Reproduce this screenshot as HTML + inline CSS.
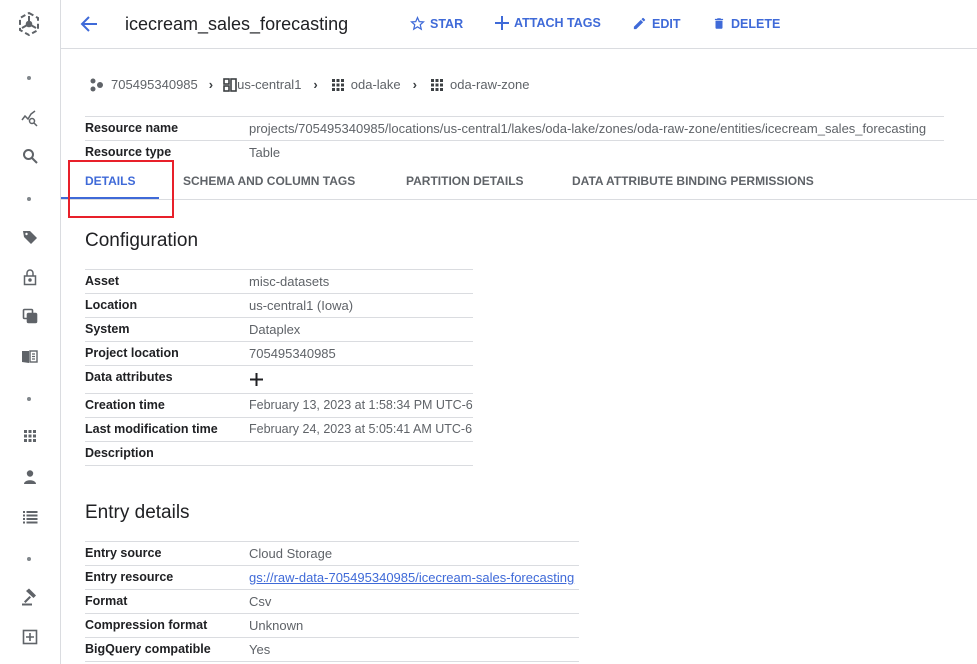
<!DOCTYPE html>
<html><head><meta charset="utf-8"><style>
*{margin:0;padding:0;box-sizing:border-box}
body{width:977px;height:664px;overflow:hidden;background:#fff;font-family:"Liberation Sans",Arial,sans-serif;position:relative;color:#202124}
.a{position:absolute;white-space:nowrap}
.hl{position:absolute;height:1px;background:#dadce0}
.lb{position:absolute;left:85px;font-size:12.5px;font-weight:bold;color:#202124;white-space:nowrap}
.vl{position:absolute;left:249px;font-size:13px;color:#5f6368;white-space:nowrap}
.btn{position:absolute;top:16px;font-size:12.5px;font-weight:bold;color:#3f6ad8;display:flex;align-items:center;gap:5px}
.tab{position:absolute;top:174px;font-size:12px;font-weight:bold;color:#5f6368}
.ic{position:absolute;left:21px;width:18px;height:18px}
.dot{position:absolute;left:27px;width:4px;height:4px;border-radius:50%;background:#80868b}
</style></head><body>
<div style="position:absolute;left:60px;top:0;width:1px;height:664px;background:#dadce0"></div>
<div class="hl" style="left:61px;top:48px;width:916px"></div>
<svg class="a" style="left:16px;top:11px" width="26" height="26" viewBox="0 0 26 26" fill="none" stroke="#5f6368" stroke-width="2"><path d="M13 2 L22 7 V19 L13 24 L4 19 V7 Z" stroke-dasharray="5 3"/><circle cx="13" cy="13" r="2.3" fill="#5f6368"/><path d="M13 13 L13 5 M13 13 L20 17 M13 13 L6 17"/></svg>
<div class="dot" style="top:76px"></div>
<svg class="ic" style="top:109px" viewBox="0 0 18 18" fill="none" stroke="#5f6368" stroke-width="1.5"><path d="M1 11 L4 7 L7 10 L10 5 L14 2"/><circle cx="11" cy="12" r="2.5"/><path d="M13 14 L16 17"/></svg>
<svg class="ic" style="top:147px" viewBox="0 0 18 18" fill="none" stroke="#5f6368" stroke-width="2"><circle cx="7.5" cy="7.5" r="4.5"/><path d="M11 11 L16 16"/></svg>
<div class="dot" style="top:197px"></div>
<svg class="ic" style="top:228px" viewBox="0 0 18 18"><path d="M2 3 H9 L16 10 L10 16 L3 9 Z" fill="#5f6368"/><circle cx="5.5" cy="6" r="1.2" fill="#fff"/></svg>
<svg class="ic" style="top:268px" viewBox="0 0 18 18" fill="none" stroke="#5f6368" stroke-width="1.5"><rect x="3.5" y="8" width="11" height="8.5"/><path d="M6 8 V5 A3 3 0 0 1 12 5 V8"/><circle cx="9" cy="12" r="1" fill="#5f6368"/></svg>
<svg class="ic" style="top:307px" viewBox="0 0 18 18" fill="none" stroke="#5f6368" stroke-width="1.6"><rect x="2.5" y="2.5" width="9" height="9" rx="1"/><rect x="6.5" y="6.5" width="9" height="9" rx="1" fill="#5f6368"/></svg>
<svg class="ic" style="top:347px" viewBox="0 0 18 18"><path d="M1 4 L8 4 L8 16 L1 15 Z" fill="#5f6368"/><rect x="9" y="4" width="7" height="11" fill="none" stroke="#5f6368" stroke-width="1.4"/><path d="M11 7 H14 M11 9.5 H14 M11 12 H14" stroke="#5f6368" stroke-width="1.2"/></svg>
<div class="dot" style="top:397px"></div>
<svg class="ic" style="top:427px" viewBox="0 0 18 18" fill="#5f6368"><rect x="3" y="3" width="3" height="3"/><rect x="7.5" y="3" width="3" height="3"/><rect x="12" y="3" width="3" height="3"/><rect x="3" y="7.5" width="3" height="3"/><rect x="7.5" y="7.5" width="3" height="3"/><rect x="12" y="7.5" width="3" height="3"/><rect x="3" y="12" width="3" height="3"/><rect x="7.5" y="12" width="3" height="3"/><rect x="12" y="12" width="3" height="3"/></svg>
<svg class="ic" style="top:468px" viewBox="0 0 18 18" fill="#5f6368"><circle cx="9" cy="5.5" r="3.2"/><path d="M3 16 C3 11 15 11 15 16 Z"/></svg>
<svg class="ic" style="top:508px" viewBox="0 0 18 18" fill="#5f6368"><rect x="2" y="3" width="2" height="2"/><rect x="5.5" y="3" width="11" height="2"/><rect x="2" y="6.5" width="2" height="2"/><rect x="5.5" y="6.5" width="11" height="2"/><rect x="2" y="10" width="2" height="2"/><rect x="5.5" y="10" width="11" height="2"/><rect x="2" y="13.5" width="2" height="2"/><rect x="5.5" y="13.5" width="11" height="2"/></svg>
<div class="dot" style="top:557px"></div>
<svg class="ic" style="top:588px" viewBox="0 0 18 18" fill="#5f6368"><path d="M5 3 L8 0.5 L15 7.5 L12.5 10 Z"/><path d="M8.5 8 L3 13.5 L4.5 15 L10 9.5 Z"/><rect x="1" y="15.5" width="10" height="2"/></svg>
<svg class="ic" style="top:628px" viewBox="0 0 18 18" fill="none" stroke="#5f6368" stroke-width="1.6"><rect x="2.5" y="2.5" width="13" height="13"/><path d="M9 5 V13 M5 9 H13"/></svg>

<svg class="a" style="left:80px;top:15px" width="18" height="18" viewBox="0 0 18 18" fill="none" stroke="#3f6ad8" stroke-width="2"><path d="M17 9 H2 M9 2 L2 9 L9 16"/></svg>
<div class="a" style="left:125px;top:14px;font-size:18px;color:#202124">icecream_sales_forecasting</div>
<div class="btn" style="left:410px"><svg width="15" height="15" viewBox="0 0 24 24" fill="none" stroke="#3f6ad8" stroke-width="2"><path d="M12 2.5 L14.8 9 L21.5 9.5 L16.4 14 L18 21 L12 17.3 L6 21 L7.6 14 L2.5 9.5 L9.2 9 Z"/></svg>STAR</div>
<div class="btn" style="left:495px"><svg width="14" height="14" viewBox="0 0 14 14" stroke="#3f6ad8" stroke-width="2"><path d="M7 0 V14 M0 7 H14"/></svg>ATTACH TAGS</div>
<div class="btn" style="left:632px"><svg width="15" height="15" viewBox="0 0 24 24" fill="#3f6ad8"><path d="M3 17.25V21h3.75L17.81 9.94l-3.75-3.75L3 17.25zM20.71 7.04a1 1 0 0 0 0-1.41l-2.34-2.34a1 1 0 0 0-1.41 0l-1.83 1.83 3.75 3.75 1.83-1.83z"/></svg>EDIT</div>
<div class="btn" style="left:712px"><svg width="14" height="15" viewBox="0 0 24 24" fill="#3f6ad8"><path d="M6 19c0 1.1.9 2 2 2h8c1.1 0 2-.9 2-2V7H6v12zM19 4h-3.5l-1-1h-5l-1 1H5v2h14V4z"/></svg>DELETE</div>

<div class="a" style="left:89px;top:77px;font-size:13px;color:#5f6368;display:flex;align-items:center">
<svg width="18" height="14" viewBox="0 0 18 14" fill="#5f6368"><circle cx="4" cy="3" r="2.5"/><circle cx="11" cy="7" r="3"/><circle cx="4" cy="11" r="2.5"/></svg>
<span style="margin-left:4px">705495340985</span>
<span style="margin:0 10px 0 11px;color:#3c4043;font-weight:bold">›</span>
<svg width="14" height="14" viewBox="0 0 14 14" fill="none" stroke="#3c4043" stroke-width="1.6"><rect x="1" y="1" width="5" height="5"/><rect x="8" y="1" width="5" height="12"/><rect x="1" y="8" width="5" height="5"/></svg>
<span>us-central1</span>
<span style="margin:0 14px 0 12px;color:#3c4043;font-weight:bold">›</span>
<svg width="12" height="12" viewBox="0 0 12 12" fill="#3c4043"><rect x="0" y="0" width="3" height="3"/><rect x="4.5" y="0" width="3" height="3"/><rect x="9" y="0" width="3" height="3"/><rect x="0" y="4.5" width="3" height="3"/><rect x="4.5" y="4.5" width="3" height="3"/><rect x="9" y="4.5" width="3" height="3"/><rect x="0" y="9" width="3" height="3"/><rect x="4.5" y="9" width="3" height="3"/><rect x="9" y="9" width="3" height="3"/></svg>
<span style="margin-left:7px">oda-lake</span>
<span style="margin:0 14px 0 12px;color:#3c4043;font-weight:bold">›</span>
<svg width="12" height="12" viewBox="0 0 12 12" fill="#3c4043"><rect x="0" y="0" width="3" height="3"/><rect x="4.5" y="0" width="3" height="3"/><rect x="9" y="0" width="3" height="3"/><rect x="0" y="4.5" width="3" height="3"/><rect x="4.5" y="4.5" width="3" height="3"/><rect x="9" y="4.5" width="3" height="3"/><rect x="0" y="9" width="3" height="3"/><rect x="4.5" y="9" width="3" height="3"/><rect x="9" y="9" width="3" height="3"/></svg>
<span style="margin-left:7px">oda-raw-zone</span>
</div>

<div class="hl" style="left:85px;top:116px;width:859px"></div>
<div class="lb" style="top:121px">Resource name</div>
<div class="vl" style="top:121px">projects/705495340985/locations/us-central1/lakes/oda-lake/zones/oda-raw-zone/entities/icecream_sales_forecasting</div>
<div class="hl" style="left:85px;top:140px;width:859px"></div>
<div class="lb" style="top:145px">Resource type</div>
<div class="vl" style="top:145px">Table</div>

<div class="tab" style="left:85px;color:#3f6ad8">DETAILS</div>
<div class="tab" style="left:183px">SCHEMA AND COLUMN TAGS</div>
<div class="tab" style="left:406px">PARTITION DETAILS</div>
<div class="tab" style="left:572px">DATA ATTRIBUTE BINDING PERMISSIONS</div>
<div class="hl" style="left:61px;top:199px;width:916px"></div>
<div class="a" style="left:61px;top:197px;width:98px;height:2px;background:#3f6ad8"></div>
<div class="a" style="left:68px;top:160px;width:106px;height:58px;border:2px solid #e8202a"></div>

<div class="a" style="left:85px;top:230px;font-size:19px;color:#202124">Configuration</div>
<div class="hl" style="left:85px;top:269px;width:388px"></div>
<div class="lb" style="top:274px">Asset</div><div class="vl" style="top:274px">misc-datasets</div>
<div class="hl" style="left:85px;top:293px;width:388px"></div>
<div class="lb" style="top:298px">Location</div><div class="vl" style="top:298px">us-central1 (Iowa)</div>
<div class="hl" style="left:85px;top:317px;width:388px"></div>
<div class="lb" style="top:322px">System</div><div class="vl" style="top:322px">Dataplex</div>
<div class="hl" style="left:85px;top:341px;width:388px"></div>
<div class="lb" style="top:346px">Project location</div><div class="vl" style="top:346px">705495340985</div>
<div class="hl" style="left:85px;top:365px;width:388px"></div>
<div class="lb" style="top:370px">Data attributes</div>
<svg class="a" style="left:250px;top:373px" width="13" height="13" viewBox="0 0 13 13" stroke="#202124" stroke-width="2"><path d="M6.5 0 V13 M0 6.5 H13"/></svg>
<div class="hl" style="left:85px;top:393px;width:388px"></div>
<div class="lb" style="top:398px">Creation time</div><div class="vl" style="top:398px;font-size:12.5px">February 13, 2023 at 1:58:34 PM UTC-6</div>
<div class="hl" style="left:85px;top:417px;width:388px"></div>
<div class="lb" style="top:422px">Last modification time</div><div class="vl" style="top:422px;font-size:12.5px">February 24, 2023 at 5:05:41 AM UTC-6</div>
<div class="hl" style="left:85px;top:441px;width:388px"></div>
<div class="lb" style="top:446px">Description</div>
<div class="hl" style="left:85px;top:465px;width:388px"></div>

<div class="a" style="left:85px;top:502px;font-size:19px;color:#202124">Entry details</div>
<div class="hl" style="left:85px;top:541px;width:494px"></div>
<div class="lb" style="top:546px">Entry source</div><div class="vl" style="top:546px">Cloud Storage</div>
<div class="hl" style="left:85px;top:565px;width:494px"></div>
<div class="lb" style="top:570px">Entry resource</div><div class="vl" style="top:570px;color:#3f6ad8;text-decoration:underline">gs://raw-data-705495340985/icecream-sales-forecasting</div>
<div class="hl" style="left:85px;top:589px;width:494px"></div>
<div class="lb" style="top:594px">Format</div><div class="vl" style="top:594px">Csv</div>
<div class="hl" style="left:85px;top:613px;width:494px"></div>
<div class="lb" style="top:618px">Compression format</div><div class="vl" style="top:618px">Unknown</div>
<div class="hl" style="left:85px;top:637px;width:494px"></div>
<div class="lb" style="top:642px">BigQuery compatible</div><div class="vl" style="top:642px">Yes</div>
<div class="hl" style="left:85px;top:661px;width:494px"></div>
</body></html>
